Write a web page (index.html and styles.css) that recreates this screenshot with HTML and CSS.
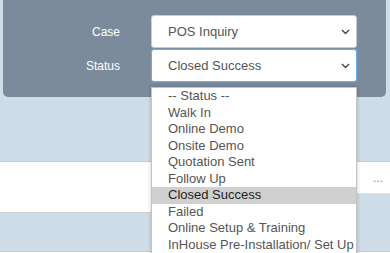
FILE: index.html
```html
<!DOCTYPE html>
<html lang="en">
<head>
    <meta charset="UTF-8">
    <meta name="viewport" content="width=device-width, initial-scale=1.0">
    <title>Case Status</title>
    <link rel="stylesheet" href="styles.css">
</head>
<body>
    <div class="panel">
        <div class="form-row">
            <label class="form-label">Case</label>
            <div class="form-control">
                <span>POS Inquiry</span>
                <svg class="caret" width="9" height="6" viewBox="0 0 9 6"><path d="M1 1l3.5 3.5L8 1" fill="none" stroke="#444" stroke-width="1.4"/></svg>
            </div>
        </div>
        <div class="form-row">
            <label class="form-label">Status</label>
            <div class="form-control focused">
                <span>Closed Success</span>
                <svg class="caret" width="9" height="6" viewBox="0 0 9 6"><path d="M1 1l3.5 3.5L8 1" fill="none" stroke="#444" stroke-width="1.4"/></svg>
            </div>
        </div>
    </div>

    <div class="list-row">
        <div class="list-main"></div>
        <div class="list-side"><span class="more">...</span></div>
    </div>
    <div class="list-next"></div>

    <!-- open status dropdown -->
    <ul class="dropdown">
        <li>-- Status --</li>
        <li>Walk In</li>
        <li>Online Demo</li>
        <li>Onsite Demo</li>
        <li>Quotation Sent</li>
        <li>Follow Up</li>
        <li class="selected">Closed Success</li>
        <li>Failed</li>
        <li>Online Setup &amp; Training</li>
        <li>InHouse Pre-Installation/ Set Up</li>
    </ul>
</body>
</html>
```

FILE: styles.css
```css
/* Page */
body {
    margin: 0;
    height: 253px;
    overflow: hidden;
    position: relative;
    font-family: "Liberation Sans", Arial, sans-serif;
    background: #cedde7;
}

/* Filter panel */
.panel {
    margin: 0 4px 0 3px;
    height: 97px;
    padding-top: 15px;
    box-sizing: border-box;
    background: #7b8b9b;
    border-radius: 0 0 5px 5px;
}

.form-row {
    display: flex;
    align-items: center;
    height: 34px;
}

.form-label {
    width: 117px;
    text-align: right;
    font-size: 12px;
    color: #fff;
    margin-right: 31px;
}

.form-control {
    width: 206px;
    height: 33px;
    box-sizing: border-box;
    display: flex;
    align-items: center;
    justify-content: space-between;
    padding: 0 6px 0 16px;
    background: #fff;
    border: 1px solid #ccc;
    border-radius: 3px;
    font-size: 13px;
    color: #555;
    margin-bottom: 1px;
}

.form-control.focused {
    border-color: #66afe9;
    box-shadow: 0 0 2px rgba(102, 175, 233, 0.5);
}

.caret {
    display: block;
}

/* Rows behind the dropdown */
.list-row {
    display: flex;
    align-items: flex-start;
    margin-top: 64px;
    border-top: 1px solid #c6cdd2;
}

.list-main {
    flex: 1;
    height: 50px;
    background: #fff;
    border-bottom: 1px solid #cfcfcf;
}

.list-side {
    width: 33px;
    height: 31px;
    background: #fff;
    display: flex;
    align-items: center;
    border-bottom: 1px solid #e2e6e9;
}

.more {
    padding-left: 16px;
    font-size: 12px;
    color: #8a8a8a;
}

.list-next {
    margin-top: 38px;
    border-top: 1px solid #c6cdd2;
    background: #fff;
    height: 10px;
}

/* Open dropdown */
.dropdown {
    position: absolute;
    left: 151px;
    top: 87px;
    width: 206px;
    box-sizing: border-box;
    margin: 0;
    padding: 0 0 6px;
    list-style: none;
    background: #fff;
    border: 1px solid #c4c4c4;
    box-shadow: 0 0 4px rgba(0, 0, 0, 0.22);
    font-size: 13px;
    color: #555;
}

.dropdown li {
    height: 16.5px;
    line-height: 16.5px;
    padding-left: 16px;
    white-space: nowrap;
}

.dropdown li.selected {
    background: #d0d0d0;
    color: #222;
}
```
